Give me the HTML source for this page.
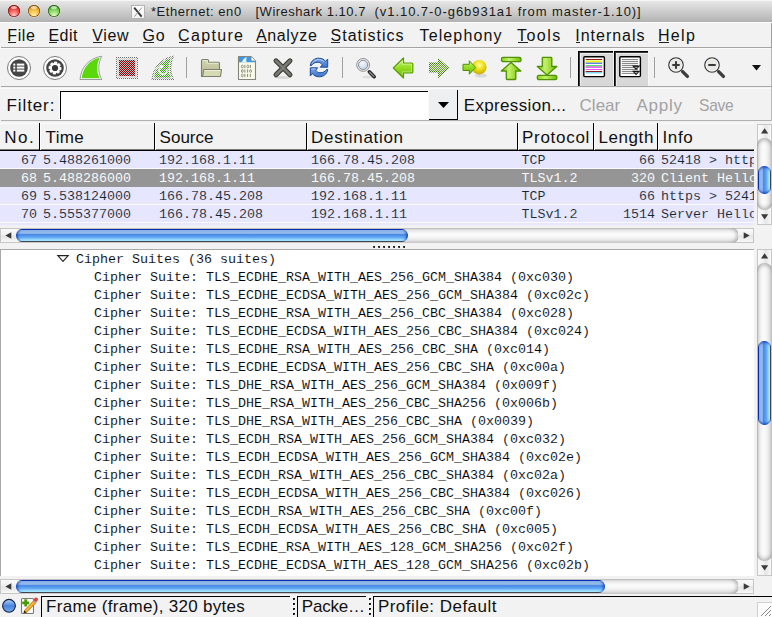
<!DOCTYPE html>
<html><head><meta charset="utf-8">
<style>
*{margin:0;padding:0;box-sizing:border-box}
html,body{width:772px;height:617px;overflow:hidden;background:#f2f2f2;font-family:"Liberation Sans",sans-serif;position:relative}
.a{position:absolute}
.t{position:absolute;white-space:pre;line-height:1;font-family:"Liberation Sans",sans-serif}
.m{position:absolute;white-space:pre;line-height:1;font-family:"Liberation Mono",monospace;font-size:13.333px;-webkit-text-stroke:0.1px #fff}
.r .m{-webkit-text-stroke-color:#e7e6ff}
.r .m.s{-webkit-text-stroke:0}
u{text-decoration:none;border-bottom:1px solid currentColor}
svg{position:absolute;overflow:visible}
</style></head><body>

<div class="a" style="left:0;top:0;width:772px;height:22px;background:linear-gradient(#e8e8e8,#d4d4d4 40%,#bebebe 80%,#b2b2b2)"></div>
<div class="a" style="left:0;top:0;width:772px;height:1px;background:#f6f6f6"></div>
<div class="a" style="left:8px;top:4.8px;width:12px;height:12px;border-radius:50%;background:radial-gradient(circle at 50% 85%,#ffc8c0 0,#f04a48 50%,#a01c1c 95%);box-shadow:inset 0 0 0 0.7px #7a1414,0 0.5px 0.5px rgba(255,255,255,.6)"></div><div class="a" style="left:11px;top:5.8px;width:6px;height:3.2px;border-radius:50%;background:rgba(255,255,255,.6)"></div>
<div class="a" style="left:28px;top:4.8px;width:12px;height:12px;border-radius:50%;background:radial-gradient(circle at 50% 85%,#fff0a0 0,#f2b840 50%,#a86a10 95%);box-shadow:inset 0 0 0 0.7px #7a4a08,0 0.5px 0.5px rgba(255,255,255,.6)"></div><div class="a" style="left:31px;top:5.8px;width:6px;height:3.2px;border-radius:50%;background:rgba(255,255,255,.6)"></div>
<div class="a" style="left:48px;top:4.8px;width:12px;height:12px;border-radius:50%;background:radial-gradient(circle at 50% 85%,#e0f8c0 0,#7ed058 50%,#2e7a18 95%);box-shadow:inset 0 0 0 0.7px #1e5a10,0 0.5px 0.5px rgba(255,255,255,.6)"></div><div class="a" style="left:51px;top:5.8px;width:6px;height:3.2px;border-radius:50%;background:rgba(255,255,255,.6)"></div>
<div class="a" style="left:131px;top:5px;width:14px;height:13.5px;background:linear-gradient(#fdfdfd,#f2f2f2);border:1px solid #b4b4b4"></div>
<svg style="left:131px;top:5px" width="14" height="14"><path d="M3.2 2.6 L10.6 11.6" stroke="#3a3a3a" stroke-width="1.9"/><path d="M10.8 2.6 L3.4 11.6" stroke="#8a8a8a" stroke-width="0.9"/></svg>
<div class="t" style="left:151px;top:5px;font-size:13px;letter-spacing:0.538px;color:#1a1a1a">*Ethernet: en0</div>
<div class="t" style="left:255.5px;top:5px;font-size:13px;letter-spacing:0.5px;color:#1a1a1a">[Wireshark 1.10.7</div>
<div class="t" style="left:374.5px;top:5px;font-size:13px;letter-spacing:0.946px;color:#1a1a1a">(v1.10.7-0-g6b931a1 from master-1.10)]</div>
<div class="a" style="left:0;top:22px;width:772px;height:25px;background:#f2f2f2"></div>
<div class="a" style="left:0;top:22px;width:772px;height:1px;background:#fdfdfd"></div>
<div class="a" style="left:1px;top:47px;width:771px;height:1px;background:#a4a4a4"></div>
<div class="a" style="left:771px;top:23px;width:1px;height:25px;background:#a0a0a0"></div>
<div class="t" style="left:7.199999999999999px;top:28px;font-size:16px;letter-spacing:0.667px;color:#111">File</div>
<div class="a" style="left:7.8999999999999995px;top:42px;width:8px;height:1px;background:#222"></div>
<div class="t" style="left:48.4px;top:28px;font-size:16px;letter-spacing:0.5px;color:#111">Edit</div>
<div class="a" style="left:49.1px;top:42px;width:7.5px;height:1px;background:#222"></div>
<div class="t" style="left:92.2px;top:28px;font-size:16px;letter-spacing:0.667px;color:#111">View</div>
<div class="a" style="left:92.9px;top:42px;width:9.5px;height:1px;background:#222"></div>
<div class="t" style="left:142.4px;top:28px;font-size:16px;letter-spacing:1.0px;color:#111">Go</div>
<div class="a" style="left:143.1px;top:42px;width:11px;height:1px;background:#222"></div>
<div class="t" style="left:178.1px;top:28px;font-size:16px;letter-spacing:1.333px;color:#111">Capture</div>
<div class="a" style="left:178.79999999999998px;top:42px;width:10.5px;height:1px;background:#222"></div>
<div class="t" style="left:255.89999999999998px;top:28px;font-size:16px;letter-spacing:0.667px;color:#111">Analyze</div>
<div class="a" style="left:256.59999999999997px;top:42px;width:10.5px;height:1px;background:#222"></div>
<div class="t" style="left:330.6px;top:28px;font-size:16px;letter-spacing:1.0px;color:#111">Statistics</div>
<div class="a" style="left:331.3px;top:42px;width:9px;height:1px;background:#222"></div>
<div class="t" style="left:419.5px;top:28px;font-size:16px;letter-spacing:1.125px;color:#111">Telephony</div>
<div class="t" style="left:516.9px;top:28px;font-size:16px;letter-spacing:1.5px;color:#111">Tools</div>
<div class="a" style="left:517.6px;top:42px;width:10px;height:1px;background:#222"></div>
<div class="t" style="left:575.2px;top:28px;font-size:16px;letter-spacing:1.0px;color:#111">Internals</div>
<div class="a" style="left:575.9000000000001px;top:42px;width:4px;height:1px;background:#222"></div>
<div class="t" style="left:657.9px;top:28px;font-size:16px;letter-spacing:1.333px;color:#111">Help</div>
<div class="a" style="left:658.6px;top:42px;width:10.5px;height:1px;background:#222"></div>
<div class="a" style="left:0;top:48px;width:772px;height:38px;background:#f2f2f2"></div>
<div class="a" style="left:0;top:48px;width:772px;height:1px;background:#fafafa"></div>
<div class="a" style="left:1px;top:86px;width:771px;height:1px;background:#a8a8a8"></div>
<div class="a" style="left:771px;top:48px;width:1px;height:38px;background:#b4b4b4"></div>
<div class="a" style="left:186px;top:57px;width:1px;height:21px;background:#a0a0a0"></div>
<div class="a" style="left:342px;top:57px;width:1px;height:21px;background:#a0a0a0"></div>
<div class="a" style="left:570px;top:57px;width:1px;height:21px;background:#a0a0a0"></div>
<div class="a" style="left:654px;top:57px;width:1px;height:21px;background:#a0a0a0"></div>
<svg style="left:7px;top:56px" width="24" height="24" viewBox="0 0 24 24">
<circle cx="12" cy="12" r="11.5" fill="#fff" stroke="#7a7a7a" stroke-width="1"/>
<circle cx="12" cy="12" r="8.8" fill="#464646"/>
<rect x="6.3" y="7.6" width="2" height="2" fill="#fff"/><rect x="6.3" y="10.6" width="2" height="2" fill="#fff"/><rect x="6.3" y="13.6" width="2" height="2" fill="#fff"/>
<rect x="9.8" y="7.6" width="7.5" height="2" fill="#fff"/><rect x="9.8" y="10.6" width="7.5" height="2" fill="#fff"/><rect x="9.8" y="13.6" width="7.5" height="2" fill="#fff"/>
</svg>
<svg style="left:43px;top:56px" width="24" height="24" viewBox="0 0 24 24">
<circle cx="12" cy="12" r="11.5" fill="#fff" stroke="#7a7a7a" stroke-width="1"/>
<circle cx="12" cy="12" r="8.8" fill="#444"/>
<polygon points="16.76,10.84 18.47,11.35 18.13,14.17 16.35,14.26 16.27,14.40 16.19,14.54 17.03,16.11 14.80,17.87 13.47,16.67 13.32,16.72 13.16,16.76 12.65,18.47 9.83,18.13 9.74,16.35 9.60,16.27 9.46,16.19 7.89,17.03 6.13,14.80 7.33,13.47 7.28,13.32 7.24,13.16 5.53,12.65 5.87,9.83 7.65,9.74 7.73,9.60 7.81,9.46 6.97,7.89 9.20,6.13 10.53,7.33 10.68,7.28 10.84,7.24 11.35,5.53 14.17,5.87 14.26,7.65 14.40,7.73 14.54,7.81 16.11,6.97 17.87,9.20 16.67,10.53 16.72,10.68" fill="#fff"/>
<circle cx="12" cy="12" r="3.1" fill="#383838"/>
</svg>
<svg style="left:79px;top:55px" width="25" height="26" viewBox="0 0 25 26">
<path d="M1 24.5 C2 13 9 3.5 22.8 1.2 C19 8 18.5 17 22.8 24.5 Z" fill="#fff" stroke="#9a9a9a" stroke-width="1"/>
<path d="M2.6 23.3 C3.8 13.5 10 5 20.8 2.8 C17.5 9 17.2 17 20.8 23.3 Z" fill="#5ad80c"/>
</svg>
<svg style="left:116px;top:57px" width="23" height="23" viewBox="0 0 23 23">
<defs><pattern id="dg" width="2" height="2" patternUnits="userSpaceOnUse"><rect width="2" height="2" fill="#f4f4f4"/><rect width="1" height="1" fill="#6a6a6a"/><rect x="1" y="1" width="1" height="1" fill="#6a6a6a"/></pattern>
<pattern id="dr" width="2" height="2" patternUnits="userSpaceOnUse"><rect width="2" height="2" fill="#c6c0c0"/><rect width="1" height="1" fill="#8a0606"/><rect x="1" y="1" width="1" height="1" fill="#8a0606"/></pattern></defs>
<rect x="0" y="0" width="22" height="22" fill="url(#dg)"/>
<rect x="1" y="1" width="20" height="20" fill="#f6f6f6"/>
<rect x="1" y="1" width="20" height="20" fill="url(#dg)" opacity="0.35"/>
<rect x="3" y="3" width="16" height="16" fill="url(#dr)"/>
</svg>
<svg style="left:151px;top:55px" width="25" height="26" viewBox="0 0 25 26">
<defs><pattern id="dgr" width="2" height="2" patternUnits="userSpaceOnUse"><rect width="2" height="2" fill="#f2f2f2"/><rect width="1" height="1" fill="#3a9a10"/><rect x="1" y="1" width="1" height="1" fill="#3a9a10"/></pattern>
<pattern id="dgy" width="2" height="2" patternUnits="userSpaceOnUse"><rect width="2" height="2" fill="#f6f6f6"/><rect width="1" height="1" fill="#707070"/><rect x="1" y="1" width="1" height="1" fill="#707070"/></pattern></defs>
<path d="M0.5 25 C1.5 13 8.5 3 23.5 0.5 C19.5 8 19 17 23.5 25 Z" fill="url(#dgy)"/>
<path d="M2 23.5 C3 13.5 9.5 4.5 21.5 2.3 C18 9 17.5 17 21.5 23.5 Z" fill="#f4f4f4"/>
<path d="M3 22.8 C4 14 10 5.5 20.3 3.3 C17 9.5 16.5 17 20.3 22.8 Z" fill="url(#dgr)"/>
<path d="M15.6 14 A3.9 3.9 0 1 1 10.5 11.8" fill="none" stroke="#f4f4f4" stroke-width="1.7"/>
<path d="M8.3 9.8 L13 10.6 L10.2 14.2 Z" fill="#f4f4f4"/>
</svg>
<svg style="left:200px;top:58px" width="23" height="20" viewBox="0 0 23 20">
<defs><linearGradient id="gfd" x1="0" y1="0" x2="0" y2="1"><stop offset="0" stop-color="#d2d6b0"/><stop offset="1" stop-color="#b4b690"/></linearGradient></defs>
<path d="M1.5 2.5 Q1.5 1.5 2.5 1.5 H7.5 Q8.5 1.5 8.5 2.5 V4.2 H18.5 Q19.5 4.2 19.5 5.2 V18.5 H1.5 Z" fill="url(#gfd)" stroke="#7e806a" stroke-width="1.1"/>
<path d="M2.6 2.6 H7.4 V5.3 H18.4" fill="none" stroke="#eef0dc" stroke-width="0.8"/>
<path d="M3.8 11.5 H21.5 L20.5 18.5 H2.5 Z" fill="#d6dab4" stroke="#7e806a" stroke-width="1.1" stroke-linejoin="round"/>
<path d="M4.6 12.5 H20.3" stroke="#f0f2e0" stroke-width="0.9"/>
</svg>
<svg style="left:237px;top:55px" width="20" height="26" viewBox="0 0 20 26">
<path d="M1.5 1.5 H14 L18.5 6 V24.5 H1.5 Z" fill="#fafae8" stroke="#858580" stroke-width="1.1" stroke-linejoin="round"/>
<path d="M2 2 H13.8 L18 6.2 V7.2 H2 Z" fill="#3a98e8"/>
<path d="M5 7.2 C5.5 4.5 7.5 2.8 10 2.3 C9 3.8 9 5.8 9.6 7.2 Z" fill="#eef4fa"/>
<path d="M14 1.5 V6 H18.5" fill="#fff" stroke="#858580" stroke-width="0.9"/>
<ellipse cx="5.30" cy="11.5" rx="0.9" ry="1.45" fill="none" stroke="#7a7a72" stroke-width="0.75"/><path d="M7.85 9.9 V13.1" stroke="#7a7a72" stroke-width="0.9"/><ellipse cx="10.80" cy="11.5" rx="0.9" ry="1.45" fill="none" stroke="#7a7a72" stroke-width="0.75"/><path d="M13.35 9.9 V13.1" stroke="#7a7a72" stroke-width="0.9"/><ellipse cx="5.30" cy="16.0" rx="0.9" ry="1.45" fill="none" stroke="#7a7a72" stroke-width="0.75"/><path d="M7.85 14.4 V17.6" stroke="#7a7a72" stroke-width="0.9"/><path d="M10.60 14.4 V17.6" stroke="#7a7a72" stroke-width="0.9"/><ellipse cx="13.55" cy="16.0" rx="0.9" ry="1.45" fill="none" stroke="#7a7a72" stroke-width="0.75"/><ellipse cx="5.30" cy="20.5" rx="0.9" ry="1.45" fill="none" stroke="#7a7a72" stroke-width="0.75"/><path d="M7.85 18.9 V22.1" stroke="#7a7a72" stroke-width="0.9"/><path d="M10.60 18.9 V22.1" stroke="#7a7a72" stroke-width="0.9"/><path d="M13.35 18.9 V22.1" stroke="#7a7a72" stroke-width="0.9"/>
</svg>
<svg style="left:272px;top:57px" width="22" height="23" viewBox="0 0 22 23">
<ellipse cx="11" cy="20.5" rx="7" ry="1.6" fill="rgba(0,0,0,.10)"/>
<path d="M4 3.8 L18 17.8 M18 3.8 L4 17.8" stroke="#383836" stroke-width="5" stroke-linecap="round"/>
<path d="M4 3.8 L18 17.8 M18 3.8 L4 17.8" stroke="#74746f" stroke-width="3" stroke-linecap="round"/>
<path d="M5 4.8 L17 16.8 M17 4.8 L5 16.8" stroke="#8a8a85" stroke-width="0.8" stroke-linecap="round"/>
</svg>
<svg style="left:309px;top:57px" width="21" height="22" viewBox="0 0 21 22">
<defs><linearGradient id="grf" x1="0" y1="0" x2="0" y2="1"><stop offset="0" stop-color="#7aa8e6"/><stop offset="1" stop-color="#3e74c8"/></linearGradient></defs>
<path d="M1.2 8.5 C2 3.5 6 1.2 9.5 1.2 C13 1.2 15.5 2.5 16.5 4.5 L18.7 2 V10.2 H11.3 L13.3 7.8 C12 6 10.5 5.2 9 5.2 C6 5.2 3.5 6.5 2.5 8.5 Z" fill="url(#grf)" stroke="#1e4c9a" stroke-width="1" stroke-linejoin="round"/>
<path d="M18.8 12.5 C18 17.5 14 19.8 10.5 19.8 C7 19.8 4.5 18.5 3.5 16.5 L1.3 19 V10.8 H8.7 L6.7 13.2 C8 15 9.5 15.8 11 15.8 C14 15.8 16.5 14.5 17.5 12.5 Z" fill="url(#grf)" stroke="#1e4c9a" stroke-width="1" stroke-linejoin="round"/>
<path d="M3 6.8 C4.5 3.8 7 2.6 9.5 2.6 C12 2.6 14 3.4 15.2 5" fill="none" stroke="#b4d0f4" stroke-width="0.9"/>
<path d="M2.6 12 H6.5" stroke="#b4d0f4" stroke-width="0.8"/>
</svg>
<svg style="left:354px;top:57px" width="24" height="23" viewBox="0 0 24 23">
<defs><radialGradient id="glens" cx="0.4" cy="0.3" r="0.8"><stop offset="0" stop-color="#f6f9fe"/><stop offset="0.6" stop-color="#d4e0f0"/><stop offset="1" stop-color="#b8c8de"/></radialGradient></defs>
<ellipse cx="14" cy="20" rx="6" ry="1.5" fill="rgba(0,0,0,.08)"/>
<path d="M15.3 14.8 L20.2 19.7" stroke="#262626" stroke-width="3.6" stroke-linecap="round"/>
<path d="M15.6 15.1 L19.9 19.4" stroke="#9a9a94" stroke-width="1.3" stroke-linecap="round"/>
<circle cx="9.1" cy="7.9" r="6.4" fill="#f0f0ee" stroke="#8e8e8e" stroke-width="1"/>
<circle cx="9.1" cy="7.9" r="4.6" fill="url(#glens)" stroke="#7e8690" stroke-width="0.9"/>
</svg>
<svg style="left:392px;top:57px" width="23" height="22" viewBox="0 0 23 22">
<defs><linearGradient id="ga" x1="0" y1="0" x2="0" y2="1"><stop offset="0" stop-color="#d0f49a"/><stop offset="0.45" stop-color="#98e024"/><stop offset="1" stop-color="#6ab806"/></linearGradient></defs>
<path d="M1.3 11 L11.5 1 V6 H19.8 Q20.8 6 20.8 7 V15 Q20.8 16 19.8 16 H11.5 V21 Z" fill="url(#ga)" stroke="#5a9c02" stroke-width="1.2" stroke-linejoin="round"/>
<path d="M3.2 11 L10.3 4 V7.2 H19.6 V14.8 H10.3 V18" fill="none" stroke="rgba(230,255,200,.55)" stroke-width="0.8"/>
</svg>
<svg style="left:428px;top:57px" width="23" height="22" viewBox="0 0 23 22">
<defs><pattern id="dga" width="2" height="2" patternUnits="userSpaceOnUse"><rect width="2" height="2" fill="#e4ecd8"/><rect width="1" height="1" fill="#6e9a3a"/><rect x="1" y="1" width="1" height="1" fill="#6e9a3a"/></pattern>
<pattern id="dgd" width="2" height="2" patternUnits="userSpaceOnUse"><rect width="2" height="2" fill="#e8eee0"/><rect width="1" height="1" fill="#3e7a08"/><rect x="1" y="1" width="1" height="1" fill="#3e7a08"/></pattern></defs>
<path d="M1 5.5 H10 V0.8 L21.5 11 L10 21.2 V15.5 H1 Z" fill="url(#dgd)"/>
<path d="M2.5 7 H11.5 V4 L19.3 11 L11.5 18 V14 H2.5 Z" fill="url(#dga)"/>
</svg>
<svg style="left:462px;top:58px" width="26" height="20" viewBox="0 0 26 20">
<defs><radialGradient id="gb" cx="0.5" cy="0.35" r="0.65"><stop offset="0" stop-color="#fffcb0"/><stop offset="0.45" stop-color="#f2e21a"/><stop offset="0.9" stop-color="#d0b400"/><stop offset="1" stop-color="#b09400"/></radialGradient></defs>
<ellipse cx="19" cy="17.5" rx="6" ry="2" fill="rgba(0,0,0,.10)"/>
<circle cx="17.2" cy="9.2" r="7.3" fill="url(#gb)"/>
<path d="M1 6.3 H7.3 V2.8 L13.7 9.5 L7.3 16.2 V12.5 H1 Z" fill="url(#ga)" stroke="#4e9002" stroke-width="1" stroke-linejoin="round"/>
</svg>
<svg style="left:500px;top:56px" width="23" height="25" viewBox="0 0 23 25">
<defs><linearGradient id="gu" x1="0" y1="0" x2="1" y2="0"><stop offset="0" stop-color="#86d010"/><stop offset="0.4" stop-color="#c4f070"/><stop offset="0.6" stop-color="#a8e040"/><stop offset="1" stop-color="#6cbc00"/></linearGradient></defs>
<rect x="1.5" y="1.3" width="19.5" height="4.4" rx="1.6" fill="url(#gu)" stroke="#4e9200" stroke-width="1.3"/>
<path d="M11 6.6 L20.8 15 H15.8 V22.8 Q15.8 23.5 15 23.5 H7 Q6.3 23.5 6.3 22.8 V15 H1.3 Z" fill="url(#gu)" stroke="#4e9200" stroke-width="1.3" stroke-linejoin="round"/>
</svg>
<svg style="left:536px;top:56px" width="23" height="25" viewBox="0 0 23 25">
<path d="M7 1.3 H15 Q15.8 1.3 15.8 2 V10.5 H20.8 L11 19 L1.3 10.5 H6.3 V2 Q6.3 1.3 7 1.3 Z" fill="url(#gu)" stroke="#4e9200" stroke-width="1.3" stroke-linejoin="round"/>
<rect x="1.3" y="19.3" width="19.5" height="4.4" rx="1.6" fill="url(#gu)" stroke="#4e9200" stroke-width="1.3"/>
</svg>
<div class="a" style="left:578px;top:51px;width:35px;height:35px;background:#d8d8d8;border-top:1px solid #000;border-left:1px solid #000;box-shadow:inset 1px 1px 0 #3a3a3a,inset 2px 2px 0 #ececec"></div>
<div class="a" style="left:614px;top:51px;width:35px;height:35px;background:#d8d8d8;border-top:1px solid #000;border-left:1px solid #000;box-shadow:inset 1px 1px 0 #3a3a3a,inset 2px 2px 0 #ececec"></div>
<div class="a" style="left:648px;top:51px;width:1px;height:35px;background:#f8f8f8"></div>
<svg style="left:583px;top:56px" width="23" height="22" viewBox="0 0 23 22">
<rect x="0.8" y="0.8" width="20.6" height="19.8" rx="1" fill="#fff" stroke="#000" stroke-width="1.4"/>
<rect x="2.6" y="3.00" width="16.6" height="1.0" fill="#8b1c1c"/><rect x="2.6" y="4.60" width="16.6" height="1.3" fill="#f4f000"/><rect x="2.6" y="5.90" width="16.6" height="0.8" fill="#b8e040"/><rect x="2.6" y="6.80" width="16.6" height="1.0" fill="#3c5cf0"/><rect x="2.6" y="9.00" width="16.6" height="1.0" fill="#50e070"/><rect x="2.6" y="10.40" width="16.6" height="1.3" fill="#c040d0"/><rect x="2.6" y="13.00" width="16.6" height="1.0" fill="#f050f8"/><rect x="2.6" y="15.00" width="16.6" height="1.0" fill="#8b1c1c"/><rect x="2.6" y="16.30" width="16.6" height="1.0" fill="#40c8e8"/>
</svg>
<svg style="left:619px;top:56px" width="23" height="22" viewBox="0 0 23 22">
<rect x="0.8" y="0.8" width="20.6" height="19.8" rx="1" fill="#fff" stroke="#000" stroke-width="1.4"/>
<rect x="2.8" y="3.00" width="16.2" height="1.1" fill="#8a8a8a"/><rect x="2.8" y="4.98" width="16.2" height="1.1" fill="#8a8a8a"/><rect x="2.8" y="6.96" width="16.2" height="1.1" fill="#8a8a8a"/><rect x="2.8" y="8.94" width="16.2" height="1.1" fill="#8a8a8a"/><rect x="2.8" y="10.92" width="16.2" height="1.1" fill="#8a8a8a"/><rect x="2.8" y="12.90" width="16.2" height="1.1" fill="#8a8a8a"/><rect x="2.8" y="14.88" width="16.2" height="1.1" fill="#8a8a8a"/><rect x="2.8" y="16.86" width="16.2" height="1.1" fill="#8a8a8a"/>
<path d="M13 9.6 H21.4 L17 14 Z" fill="#111"/><path d="M15.2 10.7 H19.2 L17.2 12.6 Z" fill="#9a9a9a"/>
<path d="M13 14.8 H21.4 L17 19.2 Z" fill="#111"/><path d="M15.2 15.9 H19.2 L17.2 17.8 Z" fill="#9a9a9a"/>
</svg>
<svg style="left:668px;top:57px" width="24" height="23" viewBox="0 0 24 23">
<path d="M14.6 14.6 L19.4 19.4" stroke="#3e3e3e" stroke-width="3.4" stroke-linecap="round"/>
<circle cx="8" cy="8" r="7.2" fill="#e8e8e4" stroke="#3e3e3e" stroke-width="1.3"/>
<circle cx="8" cy="8" r="6" fill="none" stroke="#f8f8f6" stroke-width="0.8"/>
<path d="M4.3 8 H11.7 M8 4.3 V11.7" stroke="#383838" stroke-width="2"/>
</svg>
<svg style="left:704px;top:57px" width="24" height="23" viewBox="0 0 24 23">
<path d="M14.6 14.6 L19.4 19.4" stroke="#3e3e3e" stroke-width="3.4" stroke-linecap="round"/>
<circle cx="8" cy="8" r="7.2" fill="#e8e8e4" stroke="#3e3e3e" stroke-width="1.3"/>
<circle cx="8" cy="8" r="6" fill="none" stroke="#f8f8f6" stroke-width="0.8"/>
<path d="M4.3 8 H11.7" stroke="#383838" stroke-width="2"/>
</svg>
<svg style="left:752px;top:65px" width="9" height="6" viewBox="0 0 9 6"><path d="M0 0 H9 L4.5 5.5 Z" fill="#111"/></svg>
<div class="a" style="left:0;top:87px;width:772px;height:33px;background:#f2f2f2"></div>
<div class="a" style="left:1px;top:120px;width:771px;height:1px;background:#b0b0b0"></div>
<div class="a" style="left:0;top:88px;width:771px;height:1px;background:#fbfbfb"></div>
<div class="a" style="left:771px;top:87px;width:1px;height:34px;background:#b8b8b8"></div>
<div class="t" style="left:6.5px;top:97px;font-size:17px;letter-spacing:0.9px;color:#111">Filter:</div>
<div class="a" style="left:59px;top:90px;width:370px;height:30px;background:#fafafa"></div>
<div class="a" style="left:60px;top:91px;width:368px;height:28px;background:#fff;border-top:1px solid #000;border-left:1px solid #000"></div>
<div class="a" style="left:429px;top:90px;width:29px;height:30px;background:#eeeff1;border-right:1px solid #000;border-bottom:1px solid #000"></div>
<svg style="left:438px;top:102px" width="11" height="6" viewBox="0 0 11 6"><path d="M0 0 H11 L5.5 6 Z" fill="#000"/></svg>
<div class="t" style="left:463.8px;top:97px;font-size:17px;letter-spacing:0.333px;color:#111">Expression...</div>
<div class="t" style="left:579.6px;top:97px;font-size:17px;letter-spacing:0px;color:#a2a2a2">Clear</div>
<div class="t" style="left:636.4px;top:97px;font-size:17px;letter-spacing:0.75px;color:#a2a2a2">Apply</div>
<div class="t" style="left:698.7px;top:97px;font-size:17px;letter-spacing:-0.3px;transform:scaleX(0.92);transform-origin:0 0;color:#a2a2a2">Save</div>
<div class="a" style="left:0;top:121px;width:772px;height:107px;background:#f2f2f2"></div>
<div class="a" style="left:0;top:123px;width:754px;height:27px;background:#f2f2f2;border-top:1px solid #fcfcfc"></div>
<div class="a" style="left:0;top:149px;width:754px;height:1px;background:#777"></div>
<div class="a" style="left:0;top:150px;width:754px;height:1px;background:#000"></div>
<div class="a" style="left:39px;top:123px;width:1px;height:27px;background:#000"></div>
<div class="a" style="left:40px;top:123px;width:1px;height:27px;background:#fcfcfc"></div>
<div class="a" style="left:154px;top:123px;width:1px;height:27px;background:#000"></div>
<div class="a" style="left:155px;top:123px;width:1px;height:27px;background:#fcfcfc"></div>
<div class="a" style="left:306px;top:123px;width:1px;height:27px;background:#000"></div>
<div class="a" style="left:307px;top:123px;width:1px;height:27px;background:#fcfcfc"></div>
<div class="a" style="left:517px;top:123px;width:1px;height:27px;background:#000"></div>
<div class="a" style="left:518px;top:123px;width:1px;height:27px;background:#fcfcfc"></div>
<div class="a" style="left:593px;top:123px;width:1px;height:27px;background:#000"></div>
<div class="a" style="left:594px;top:123px;width:1px;height:27px;background:#fcfcfc"></div>
<div class="a" style="left:657px;top:123px;width:1px;height:27px;background:#000"></div>
<div class="a" style="left:658px;top:123px;width:1px;height:27px;background:#fcfcfc"></div>
<div class="t" style="left:4.2px;top:129px;font-size:17px;letter-spacing:1.5px;color:#111">No.</div>
<div class="t" style="left:45.6px;top:129px;font-size:17px;letter-spacing:0.333px;color:#111">Time</div>
<div class="t" style="left:159.6px;top:129px;font-size:17px;letter-spacing:0px;color:#111">Source</div>
<div class="t" style="left:311px;top:129px;font-size:17px;letter-spacing:0.7px;color:#111">Destination</div>
<div class="t" style="left:522px;top:129px;font-size:17px;letter-spacing:0.714px;color:#111">Protocol</div>
<div class="t" style="left:598.4px;top:129px;font-size:17px;letter-spacing:0.6px;color:#111">Length</div>
<div class="t" style="left:662.4px;top:129px;font-size:17px;letter-spacing:0.667px;color:#111">Info</div>
<div class="a" style="left:0;top:151px;width:754px;height:74px;background:#e7e6ff"></div>
<div class="a" style="left:0;top:168px;width:754px;height:1px;background:#fbfbff"></div>
<div class="a" style="left:0;top:204px;width:754px;height:1px;background:#fbfbff"></div>
<div class="a" style="left:0;top:222px;width:754px;height:1px;background:#fbfbff"></div>
<div class="a" style="left:0;top:169px;width:754px;height:18px;background:#959595"></div>
<div class="a r" style="left:0;top:151px;width:754px;height:74px;overflow:hidden">
<div class="m" style="left:21px;top:3px;color:#12272e">67</div>
<div class="m" style="left:43px;top:3px;color:#12272e">5.488261000</div>
<div class="m" style="left:159px;top:3px;color:#12272e">192.168.1.11</div>
<div class="m" style="left:311px;top:3px;color:#12272e">166.78.45.208</div>
<div class="m" style="left:521.5px;top:3px;color:#12272e">TCP</div>
<div class="m" style="left:639px;top:3px;color:#12272e">66</div>
<div class="m" style="left:661px;top:3px;color:#12272e">52418 &gt; http</div>
<div class="m s" style="left:21px;top:21px;color:#f8f8f8">68</div>
<div class="m s" style="left:43px;top:21px;color:#f8f8f8">5.488286000</div>
<div class="m s" style="left:159px;top:21px;color:#f8f8f8">192.168.1.11</div>
<div class="m s" style="left:311px;top:21px;color:#f8f8f8">166.78.45.208</div>
<div class="m s" style="left:521.5px;top:21px;color:#f8f8f8">TLSv1.2</div>
<div class="m s" style="left:631px;top:21px;color:#f8f8f8">320</div>
<div class="m s" style="left:661px;top:21px;color:#f8f8f8">Client Hello</div>
<div class="m" style="left:21px;top:39px;color:#12272e">69</div>
<div class="m" style="left:43px;top:39px;color:#12272e">5.538124000</div>
<div class="m" style="left:159px;top:39px;color:#12272e">166.78.45.208</div>
<div class="m" style="left:311px;top:39px;color:#12272e">192.168.1.11</div>
<div class="m" style="left:521.5px;top:39px;color:#12272e">TCP</div>
<div class="m" style="left:639px;top:39px;color:#12272e">66</div>
<div class="m" style="left:661px;top:39px;color:#12272e">https &gt; 52418</div>
<div class="m" style="left:21px;top:57px;color:#12272e">70</div>
<div class="m" style="left:43px;top:57px;color:#12272e">5.555377000</div>
<div class="m" style="left:159px;top:57px;color:#12272e">166.78.45.208</div>
<div class="m" style="left:311px;top:57px;color:#12272e">192.168.1.11</div>
<div class="m" style="left:521.5px;top:57px;color:#12272e">TLSv1.2</div>
<div class="m" style="left:623px;top:57px;color:#12272e">1514</div>
<div class="m" style="left:661px;top:57px;color:#12272e">Server Hello</div>
</div>
<div class="a" style="left:0px;top:228px;width:754px;height:15px;background:#f6f6f6;border:1px solid #c6c6c6"></div><div class="a" style="left:1px;top:229px;width:15px;height:13px;background:linear-gradient(#fafafa,#f0f0f0 45%,#e4e4e4 55%,#f8f8f8)"></div><svg style="left:5px;top:232px" width="7" height="7" viewBox="0 0 7 7"><path d="M0.3 3.5 L6.3 0.3 V6.7 Z" fill="#3a3a3a"/></svg><div class="a" style="left:16px;top:228px;width:723px;height:15px;background:linear-gradient(#b8b8b8 0,#d8d8d8 1px,#ececec 3px,#fbfbfb 6px,#f6f6f6 9px,#e6e6e6 12px,#d2d2d2 14px);border-radius:7px;box-shadow:inset -4px 0 4px -2px rgba(0,0,0,.28)"></div><div class="a" style="left:738px;top:229px;width:15px;height:13px;background:linear-gradient(#fafafa,#f0f0f0 45%,#e4e4e4 55%,#f8f8f8)"></div><svg style="left:743px;top:232px" width="7" height="7" viewBox="0 0 7 7"><path d="M6.7 3.5 L0.7 0.3 V6.7 Z" fill="#3a3a3a"/></svg><div class="a" style="left:16px;top:229px;width:392px;height:13px;background:linear-gradient(#0630b0 0,#0630b0 1px,#8ab2e8 1.5px,#96bcea 4.3px,#4e8ce6 5.2px,#4a8ae6 6px,#64aaf4 8.5px,#9adeff 10.8px,#a2e4ff 11.8px,#4a4a4a 12.4px,#404040 13px);border-radius:6.5px;box-shadow:inset 3px 0 3px -2px #0630b0,inset -3px 0 3px -2px #0630b0"></div>
<div class="a" style="left:757px;top:124px;width:15px;height:101px;background:#f6f6f6;border:1px solid #c6c6c6"></div><div class="a" style="left:758px;top:125px;width:13px;height:14px;background:linear-gradient(90deg,#fafafa,#f0f0f0 45%,#e4e4e4 55%,#f8f8f8)"></div><svg style="left:761px;top:128px" width="8" height="6" viewBox="0 0 8 6"><path d="M3.6 0.2 L7.2 5.6 H0 Z" fill="#3a3a3a"/></svg><div class="a" style="left:758px;top:210px;width:13px;height:14px;background:linear-gradient(90deg,#fafafa,#f0f0f0 45%,#e4e4e4 55%,#f8f8f8)"></div><div class="a" style="left:757px;top:138px;width:15px;height:72px;background:linear-gradient(90deg,#b8b8b8 0,#d8d8d8 1px,#ececec 3px,#fbfbfb 6px,#f6f6f6 9px,#e6e6e6 12px,#d2d2d2 14px);border-radius:7px;box-shadow:inset 0 4px 4px -2px rgba(0,0,0,.28),inset 0 -4px 4px -2px rgba(0,0,0,.28)"></div><svg style="left:761px;top:214px" width="8" height="6" viewBox="0 0 8 6"><path d="M3.6 5.6 L7.2 0.2 H0 Z" fill="#3a3a3a"/></svg><div class="a" style="left:758px;top:165.5px;width:13px;height:28.5px;background:linear-gradient(90deg,#0630b0 0,#0630b0 1px,#8ab2e8 1.5px,#96bcea 4.3px,#4e8ce6 5.2px,#4a8ae6 6px,#64aaf4 8.5px,#9adeff 10.8px,#a2e4ff 11.8px,#4a4a4a 12.4px,#404040 13px);border-radius:6.5px;box-shadow:inset 0 3px 3px -2px #0630b0,inset 0 -3px 3px -2px #0630b0"></div>
<div class="a" style="left:373px;top:246px;width:2px;height:2px;background:#222;border-radius:0 0 0 1px"></div><div class="a" style="left:372px;top:245px;width:1px;height:1px;background:#fff"></div>
<div class="a" style="left:378px;top:246px;width:2px;height:2px;background:#222;border-radius:0 0 0 1px"></div><div class="a" style="left:377px;top:245px;width:1px;height:1px;background:#fff"></div>
<div class="a" style="left:383px;top:246px;width:2px;height:2px;background:#222;border-radius:0 0 0 1px"></div><div class="a" style="left:382px;top:245px;width:1px;height:1px;background:#fff"></div>
<div class="a" style="left:388px;top:246px;width:2px;height:2px;background:#222;border-radius:0 0 0 1px"></div><div class="a" style="left:387px;top:245px;width:1px;height:1px;background:#fff"></div>
<div class="a" style="left:393px;top:246px;width:2px;height:2px;background:#222;border-radius:0 0 0 1px"></div><div class="a" style="left:392px;top:245px;width:1px;height:1px;background:#fff"></div>
<div class="a" style="left:398px;top:246px;width:2px;height:2px;background:#222;border-radius:0 0 0 1px"></div><div class="a" style="left:397px;top:245px;width:1px;height:1px;background:#fff"></div>
<div class="a" style="left:403px;top:246px;width:2px;height:2px;background:#222;border-radius:0 0 0 1px"></div><div class="a" style="left:402px;top:245px;width:1px;height:1px;background:#fff"></div>
<div class="a" style="left:0;top:249px;width:754px;height:327px;background:#fff;border-top:1px solid #a8a8a8;border-left:1px solid #a8a8a8"></div>
<svg style="left:57px;top:255px" width="12" height="7" viewBox="0 0 12 7"><path d="M0.8 0.6 H11.2 L6 6.4 Z" fill="none" stroke="#222" stroke-width="1.1" stroke-linejoin="miter"/></svg>
<div class="m" style="left:76px;top:253px;color:#000">Cipher Suites (36 suites)</div>
<div class="m" style="left:94px;top:271px;color:#000">Cipher Suite: TLS_ECDHE_RSA_WITH_AES_256_GCM_SHA384 (0xc030)</div>
<div class="m" style="left:94px;top:289px;color:#000">Cipher Suite: TLS_ECDHE_ECDSA_WITH_AES_256_GCM_SHA384 (0xc02c)</div>
<div class="m" style="left:94px;top:307px;color:#000">Cipher Suite: TLS_ECDHE_RSA_WITH_AES_256_CBC_SHA384 (0xc028)</div>
<div class="m" style="left:94px;top:325px;color:#000">Cipher Suite: TLS_ECDHE_ECDSA_WITH_AES_256_CBC_SHA384 (0xc024)</div>
<div class="m" style="left:94px;top:343px;color:#000">Cipher Suite: TLS_ECDHE_RSA_WITH_AES_256_CBC_SHA (0xc014)</div>
<div class="m" style="left:94px;top:361px;color:#000">Cipher Suite: TLS_ECDHE_ECDSA_WITH_AES_256_CBC_SHA (0xc00a)</div>
<div class="m" style="left:94px;top:379px;color:#000">Cipher Suite: TLS_DHE_RSA_WITH_AES_256_GCM_SHA384 (0x009f)</div>
<div class="m" style="left:94px;top:397px;color:#000">Cipher Suite: TLS_DHE_RSA_WITH_AES_256_CBC_SHA256 (0x006b)</div>
<div class="m" style="left:94px;top:415px;color:#000">Cipher Suite: TLS_DHE_RSA_WITH_AES_256_CBC_SHA (0x0039)</div>
<div class="m" style="left:94px;top:433px;color:#000">Cipher Suite: TLS_ECDH_RSA_WITH_AES_256_GCM_SHA384 (0xc032)</div>
<div class="m" style="left:94px;top:451px;color:#000">Cipher Suite: TLS_ECDH_ECDSA_WITH_AES_256_GCM_SHA384 (0xc02e)</div>
<div class="m" style="left:94px;top:469px;color:#000">Cipher Suite: TLS_ECDH_RSA_WITH_AES_256_CBC_SHA384 (0xc02a)</div>
<div class="m" style="left:94px;top:487px;color:#000">Cipher Suite: TLS_ECDH_ECDSA_WITH_AES_256_CBC_SHA384 (0xc026)</div>
<div class="m" style="left:94px;top:505px;color:#000">Cipher Suite: TLS_ECDH_RSA_WITH_AES_256_CBC_SHA (0xc00f)</div>
<div class="m" style="left:94px;top:523px;color:#000">Cipher Suite: TLS_ECDH_ECDSA_WITH_AES_256_CBC_SHA (0xc005)</div>
<div class="m" style="left:94px;top:541px;color:#000">Cipher Suite: TLS_ECDHE_RSA_WITH_AES_128_GCM_SHA256 (0xc02f)</div>
<div class="m" style="left:94px;top:559px;color:#000">Cipher Suite: TLS_ECDHE_ECDSA_WITH_AES_128_GCM_SHA256 (0xc02b)</div>
<div class="a" style="left:757px;top:249px;width:15px;height:327px;background:#f6f6f6;border:1px solid #c6c6c6"></div><div class="a" style="left:758px;top:250px;width:13px;height:14px;background:linear-gradient(90deg,#fafafa,#f0f0f0 45%,#e4e4e4 55%,#f8f8f8)"></div><svg style="left:761px;top:253px" width="8" height="6" viewBox="0 0 8 6"><path d="M3.6 0.2 L7.2 5.6 H0 Z" fill="#3a3a3a"/></svg><div class="a" style="left:758px;top:561px;width:13px;height:14px;background:linear-gradient(90deg,#fafafa,#f0f0f0 45%,#e4e4e4 55%,#f8f8f8)"></div><div class="a" style="left:757px;top:263px;width:15px;height:298px;background:linear-gradient(90deg,#b8b8b8 0,#d8d8d8 1px,#ececec 3px,#fbfbfb 6px,#f6f6f6 9px,#e6e6e6 12px,#d2d2d2 14px);border-radius:7px;box-shadow:inset 0 4px 4px -2px rgba(0,0,0,.28),inset 0 -4px 4px -2px rgba(0,0,0,.28)"></div><svg style="left:761px;top:565px" width="8" height="6" viewBox="0 0 8 6"><path d="M3.6 5.6 L7.2 0.2 H0 Z" fill="#3a3a3a"/></svg><div class="a" style="left:758px;top:340.5px;width:13px;height:84.5px;background:linear-gradient(90deg,#0630b0 0,#0630b0 1px,#8ab2e8 1.5px,#96bcea 4.3px,#4e8ce6 5.2px,#4a8ae6 6px,#64aaf4 8.5px,#9adeff 10.8px,#a2e4ff 11.8px,#4a4a4a 12.4px,#404040 13px);border-radius:6.5px;box-shadow:inset 0 3px 3px -2px #0630b0,inset 0 -3px 3px -2px #0630b0"></div>
<div class="a" style="left:0px;top:579px;width:754px;height:15px;background:#f6f6f6;border:1px solid #c6c6c6"></div><div class="a" style="left:1px;top:580px;width:15px;height:13px;background:linear-gradient(#fafafa,#f0f0f0 45%,#e4e4e4 55%,#f8f8f8)"></div><svg style="left:5px;top:583px" width="7" height="7" viewBox="0 0 7 7"><path d="M0.3 3.5 L6.3 0.3 V6.7 Z" fill="#3a3a3a"/></svg><div class="a" style="left:16px;top:579px;width:723px;height:15px;background:linear-gradient(#b8b8b8 0,#d8d8d8 1px,#ececec 3px,#fbfbfb 6px,#f6f6f6 9px,#e6e6e6 12px,#d2d2d2 14px);border-radius:7px;box-shadow:inset -4px 0 4px -2px rgba(0,0,0,.28)"></div><div class="a" style="left:738px;top:580px;width:15px;height:13px;background:linear-gradient(#fafafa,#f0f0f0 45%,#e4e4e4 55%,#f8f8f8)"></div><svg style="left:743px;top:583px" width="7" height="7" viewBox="0 0 7 7"><path d="M6.7 3.5 L0.7 0.3 V6.7 Z" fill="#3a3a3a"/></svg><div class="a" style="left:16px;top:580px;width:589px;height:13px;background:linear-gradient(#0630b0 0,#0630b0 1px,#8ab2e8 1.5px,#96bcea 4.3px,#4e8ce6 5.2px,#4a8ae6 6px,#64aaf4 8.5px,#9adeff 10.8px,#a2e4ff 11.8px,#4a4a4a 12.4px,#404040 13px);border-radius:6.5px;box-shadow:inset 3px 0 3px -2px #0630b0,inset -3px 0 3px -2px #0630b0"></div>
<div class="a" style="left:0;top:595px;width:772px;height:22px;background:#f2f2f2"></div>
<svg style="left:2px;top:598px" width="15" height="16" viewBox="0 0 15 16">
<defs><linearGradient id="gbl" x1="0" y1="0" x2="0" y2="1"><stop offset="0" stop-color="#b4d2f6"/><stop offset="0.35" stop-color="#6a9ee8"/><stop offset="0.5" stop-color="#4a84dc"/><stop offset="1" stop-color="#76acf2"/></linearGradient></defs>
<circle cx="7" cy="7.8" r="6.4" fill="url(#gbl)" stroke="#142244" stroke-width="1.1"/>
</svg>
<svg style="left:20px;top:597px" width="18" height="18" viewBox="0 0 18 18">
<rect x="1.5" y="1.5" width="12" height="15" rx="1" fill="#fcfcfc" stroke="#7a7a7a" stroke-width="1.1"/>
<path d="M2.2 5.8 H9.2 M5.7 2.2 V9.5" stroke="#4a9a06" stroke-width="2.8"/>
<path d="M4.3 13.6 L13.6 3.6 L16 5.8 L6.6 15.6 L3.8 16 Z" fill="#f0a020" stroke="#b06a08" stroke-width="0.6" stroke-linejoin="round"/>
<path d="M5.6 14 L14.6 4.6" stroke="#ffd070" stroke-width="0.8"/>
<path d="M13.2 4 L14.6 2.5 L17 4.7 L15.6 6.2 Z" fill="#a0a0a0"/>
<circle cx="16" cy="2.6" r="2" fill="#e83838"/>
<path d="M3.8 16 L4.3 13.6 L6.6 15.6 Z" fill="#1a1a1a"/>
</svg>
<div class="a" style="left:41px;top:596px;width:249px;height:21px;border-top:1px solid #000;border-left:1px solid #000;background:#f2f2f2"></div>
<div class="a" style="left:297px;top:596px;width:69px;height:21px;border-top:1px solid #000;border-left:1px solid #000;background:#f2f2f2"></div>
<div class="a" style="left:373px;top:596px;width:399px;height:21px;border-top:1px solid #000;border-left:1px solid #000;background:#f2f2f2"></div>
<div class="a" style="left:293px;top:598px;width:2px;height:2px;background:#111;border-radius:0 0 1px 0"></div><div class="a" style="left:292px;top:597px;width:1px;height:1px;background:#fff"></div>
<div class="a" style="left:293px;top:603px;width:2px;height:2px;background:#111;border-radius:0 0 1px 0"></div><div class="a" style="left:292px;top:602px;width:1px;height:1px;background:#fff"></div>
<div class="a" style="left:293px;top:608px;width:2px;height:2px;background:#111;border-radius:0 0 1px 0"></div><div class="a" style="left:292px;top:607px;width:1px;height:1px;background:#fff"></div>
<div class="a" style="left:293px;top:613px;width:2px;height:2px;background:#111;border-radius:0 0 1px 0"></div><div class="a" style="left:292px;top:612px;width:1px;height:1px;background:#fff"></div>
<div class="a" style="left:369px;top:598px;width:2px;height:2px;background:#111;border-radius:0 0 1px 0"></div><div class="a" style="left:368px;top:597px;width:1px;height:1px;background:#fff"></div>
<div class="a" style="left:369px;top:603px;width:2px;height:2px;background:#111;border-radius:0 0 1px 0"></div><div class="a" style="left:368px;top:602px;width:1px;height:1px;background:#fff"></div>
<div class="a" style="left:369px;top:608px;width:2px;height:2px;background:#111;border-radius:0 0 1px 0"></div><div class="a" style="left:368px;top:607px;width:1px;height:1px;background:#fff"></div>
<div class="a" style="left:369px;top:613px;width:2px;height:2px;background:#111;border-radius:0 0 1px 0"></div><div class="a" style="left:368px;top:612px;width:1px;height:1px;background:#fff"></div>
<div class="t" style="left:46.1px;top:597.5px;font-size:17px;letter-spacing:0.304px;color:#111">Frame (frame), 320 bytes</div>
<div class="t" style="left:301.8px;top:597.5px;font-size:17px;letter-spacing:-0.2px;color:#111">Packe…</div>
<div class="t" style="left:377.9px;top:597.5px;font-size:17px;letter-spacing:0.467px;color:#111">Profile: Default</div>
<div class="a" style="left:757px;top:602px;width:15px;height:15px;background:#fbfbfb;border-left:1px solid #d0d0d0;border-top:1px solid #d0d0d0"></div>
<svg style="left:758px;top:603px" width="14" height="14" viewBox="0 0 14 14"><path d="M3 13 L13 3 M7 13 L13 7 M11 13 L13 11" stroke="#888" stroke-width="1"/></svg>
</body></html>
